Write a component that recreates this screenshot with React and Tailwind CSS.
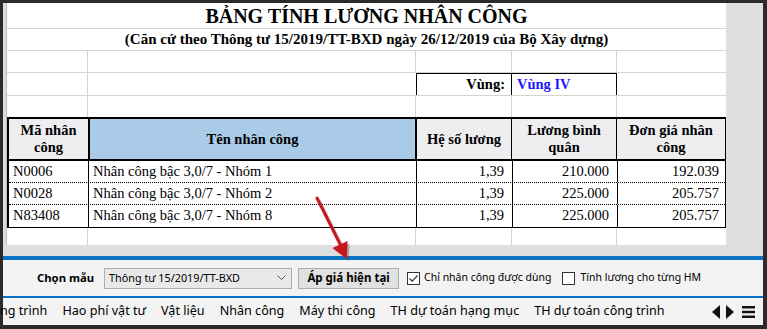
import React from 'react'

const W = [81, 328, 96, 105, 109]
const serif = { fontFamily: '"Liberation Serif", "Times New Roman", serif' }

const ROWS = [
  ['N0006', 'Nhân công bậc 3,0/7 - Nhóm 1', '1,39', '210.000', '192.039'],
  ['N0028', 'Nhân công bậc 3,0/7 - Nhóm 2', '1,39', '225.000', '205.757'],
  ['N83408', 'Nhân công bậc 3,0/7 - Nhóm 8', '1,39', '225.000', '205.757'],
]

const TABS = ['ng trình', 'Hao phí vật tư', 'Vật liệu', 'Nhân công', 'Máy thi công', 'TH dự toán hạng mục', 'TH dự toán công trình']

function EmptyRow({ h, last }) {
  return (
    <div className={'flex ' + (last ? '' : 'border-b border-[#d4d4d4]')} style={{ height: h }}>
      {W.map((w, i) => (
        <div key={i} className={i < 4 ? 'border-r border-[#d4d4d4]' : ''} style={{ width: w }} />
      ))}
    </div>
  )
}

function Checkbox({ checked }) {
  return (
    <span className="w-[13px] h-[13px] border border-[#333] bg-white flex items-center justify-center">
      {checked && (
        <svg width="11" height="11" viewBox="0 0 11 11">
          <path d="M1.5 5.5 L4.2 8.2 L9.5 2.5" fill="none" stroke="#333" strokeWidth="1.2" />
        </svg>
      )}
    </span>
  )
}

export default function App() {
  return (
    <div className="relative w-[767px] h-[329px] bg-[#2b2b2b] pt-[3px] pl-[3px] pr-[4px] pb-[4px] flex flex-col overflow-hidden">
      <div className="flex-1 flex flex-col bg-[#f3f3f3]" style={{ fontFamily: '"Noto Sans", "Segoe UI", sans-serif' }}>
        {/* sheet */}
        <div className="flex h-[242px] bg-[#e0e0e0]">
          <div className="w-[4px] bg-[#dcdcdc] border-r border-[#bdbdbd]" />
          <div className="w-[719px] bg-white text-black text-[14.5px]" style={serif}>
            <div className="h-[26px] border-b border-[#d4d4d4] flex items-center justify-center font-bold text-[20px]">
              BẢNG TÍNH LƯƠNG NHÂN CÔNG
            </div>
            <div className="h-[22px] border-b border-[#d4d4d4] flex items-center justify-center font-bold text-[15px]">
              (Căn cứ theo Thông tư 15/2019/TT-BXD ngày 26/12/2019 của Bộ Xây dựng)
            </div>
            <EmptyRow h={22} />
            <div className="flex h-[23px] border-b border-[#d4d4d4]">
              <div className="border-r border-[#d4d4d4]" style={{ width: W[0] }} />
              <div style={{ width: W[1] }} />
              <div className="border border-black border-b-0 flex items-center justify-end pr-[6px] font-bold" style={{ width: W[2] }}>Vùng:</div>
              <div className="border border-l-0 border-black border-b-0 flex items-center pl-[5px] font-bold text-[#1a1aff]" style={{ width: W[3] }}>Vùng IV</div>
              <div style={{ width: W[4] }} />
            </div>
            <EmptyRow h={21} last />
            {/* table */}
            <div className="border-t-2 border-l-2 border-r border-b border-black">
              <div className="flex h-[42px] border-b-2 border-black font-bold leading-[17px]">
                <div className="bg-[#eeeef0] flex items-center justify-center text-center" style={{ width: W[0] - 2 }}>Mã nhân<br />công</div>
                <div className="bg-[#a9cbe8] border-2 border-black border-b-0 border-t-0 flex items-center justify-center" style={{ width: W[1] + 1 }}>Tên nhân công</div>
                <div className="bg-[#eeeef0] border-r border-black flex items-center justify-center" style={{ width: W[2] - 1 }}>Hệ số lương</div>
                <div className="bg-[#eeeef0] border-r border-black flex items-center justify-center text-center" style={{ width: W[3] }}>Lương bình<br />quân</div>
                <div className="bg-[#eeeef0] flex items-center justify-center text-center" style={{ width: W[4] - 1 }}>Đơn giá nhân<br />công</div>
              </div>
              {ROWS.map((r, ri) => (
                <div key={ri} className={'flex h-[22px] ' + (ri < 2 ? 'border-b border-dotted border-black' : '')}>
                  <div className="border-r border-black flex items-center pl-[4px]" style={{ width: W[0] - 1 }}>{r[0]}</div>
                  <div className="border-r border-black flex items-center pl-[4px]" style={{ width: W[1] }}>{r[1]}</div>
                  <div className="border-r border-black flex items-center justify-end pr-[8px]" style={{ width: W[2] }}>{r[2]}</div>
                  <div className="border-r border-black flex items-center justify-end pr-[8px]" style={{ width: W[3] }}>{r[3]}</div>
                  <div className="flex items-center justify-end pr-[6px]" style={{ width: W[4] - 2 }}>{r[4]}</div>
                </div>
              ))}
            </div>
            <EmptyRow h={20} last />
          </div>
          <div className="flex-1 bg-[#e0e0e0]" />
        </div>
        <div className="h-[11px] bg-[#dedede]" />
        <div className="h-[4px] bg-[#0a72c4]" />
        {/* toolbar */}
        <div className="h-[36px] flex items-center text-black">
          <span className="ml-[34px] font-bold text-[11.3px]">Chọn mẫu</span>
          <div className="ml-[10px] w-[188px] h-[21px] border border-[#adadad] bg-[#e9e9e9] flex items-center justify-between pl-[4px] pr-[5px]">
            <span className="text-[10.8px]">Thông tư 15/2019/TT-BXD</span>
            <svg width="9" height="6" viewBox="0 0 9 6"><path d="M0.5 0.5 L4.5 4.5 L8.5 0.5" fill="none" stroke="#555" /></svg>
          </div>
          <div className="ml-[6px] w-[101px] h-[21px] border border-[#adadad] bg-[#e1e1e1] flex items-center justify-center font-bold text-[11.5px]">
            Áp giá hiện tại
          </div>
          <div className="ml-[8px] flex items-center gap-[4px] text-[10.5px]">
            <Checkbox checked />
            <span>Chỉ nhân công được dùng</span>
          </div>
          <div className="ml-[11px] flex items-center gap-[5px] text-[10.5px]">
            <Checkbox />
            <span>Tính lương cho từng HM</span>
          </div>
        </div>
        <div className="h-[2px] bg-[#0a72c4]" />
        {/* tabs */}
        <div className="flex-1 flex items-center text-[12.6px] text-black -ml-[3px] relative">
          <div className="flex items-center gap-[15px]">
            {TABS.map((t) => <span key={t} className="whitespace-nowrap">{t}</span>)}
          </div>
          <div className="absolute right-[8px] top-[7px] flex items-center gap-[6px]">
            <svg width="24" height="14" viewBox="0 0 24 14">
              <path d="M0 7 L8 0 L8 14 Z" fill="#111" />
              <path d="M14 0 L22 7 L14 14 Z" fill="#111" />
            </svg>
            <svg width="13" height="12" viewBox="0 0 13 12">
              <rect x="0" y="0" width="13" height="2.5" fill="#111" />
              <rect x="0" y="4.75" width="13" height="2.5" fill="#111" />
              <rect x="0" y="9.5" width="13" height="2.5" fill="#111" />
            </svg>
          </div>
        </div>
      </div>
      {/* red arrow */}
      <svg className="absolute left-0 top-0 pointer-events-none" width="767" height="329">
        <g transform="translate(2,2)" opacity="0.35">
          <line x1="317" y1="198" x2="340" y2="244" stroke="#555" strokeWidth="3" />
          <polygon points="347,259 332.5,248 347.5,241" fill="#555" />
        </g>
        <line x1="317" y1="198" x2="340" y2="244" stroke="#c8171c" strokeWidth="3" strokeLinecap="round" />
        <polygon points="347,259 332.5,248 347.5,241" fill="#c8171c" />
      </svg>
    </div>
  )
}
